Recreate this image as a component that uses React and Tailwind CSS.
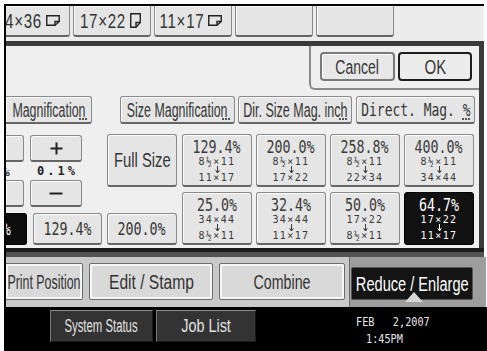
import React from "react";

const SANS = "font-['Liberation_Sans',Arial,sans-serif]";
const MONO = "font-['DejaVu_Sans_Mono',monospace]";

const face =
  "bg-[#e5e5e5] border border-[#8a8a8a] border-b-2 border-b-[#666] rounded-[3px] shadow-[inset_1px_1px_0_#fbfbfb]";

function Landscape() {
  return (
    <svg width="14" height="11" viewBox="0 0 14 11" className="shrink-0">
      <path d="M0.75 0.75H13.25V6.5L9 10.25H0.75Z" fill="none" stroke="#222" strokeWidth="1.4" />
      <path d="M13.25 6.5H9V10.25" fill="none" stroke="#222" strokeWidth="1.4" />
    </svg>
  );
}

function Portrait() {
  return (
    <svg width="11" height="15" viewBox="0 0 11 15" className="shrink-0">
      <path d="M0.75 0.75H10.25V9.5L6 14.25H0.75Z" fill="none" stroke="#222" strokeWidth="1.4" />
      <path d="M10.25 9.5H6V14.25" fill="none" stroke="#222" strokeWidth="1.4" />
    </svg>
  );
}

function Arrow() {
  return (
    <svg width="5" height="8" viewBox="0 0 5 8" className="shrink-0 overflow-visible">
      <path d="M2.5 0V6.5M0.6 4.2L2.5 7L4.4 4.2" fill="none" stroke="currentColor" strokeWidth="1" />
    </svg>
  );
}

function Dots() {
  return (
    <span className="absolute right-[4px] bottom-[2px] flex gap-[1px]">
      <span className="w-[2px] h-[2px] bg-[#555]" />
      <span className="w-[2px] h-[2px] bg-[#555]" />
      <span className="w-[2px] h-[2px] bg-[#555]" />
    </span>
  );
}

function MagBtn({ big, a, b, sel }) {
  return (
    <div
      className={`h-[53px] flex flex-col items-center pt-[2px] ${
        sel
          ? "bg-[#111] border border-black rounded-[3px] text-white"
          : `${face} text-[#3a3a3a]`
      }`}
    >
      <div className="h-[20px] flex items-center">
        <span className={`${MONO} inline-block whitespace-nowrap text-[18px] leading-none scale-x-[0.74]`}>{big}</span>
      </div>
      <div className={`${MONO} h-[10px] flex items-center whitespace-nowrap text-[10px] leading-none tracking-[1.4px]`}>{a}</div>
      <div className="h-[6px] flex items-center justify-center">
        <Arrow />
      </div>
      <div className={`${MONO} h-[10px] flex items-center whitespace-nowrap text-[10px] leading-none tracking-[1.4px]`}>{b}</div>
    </div>
  );
}

const grid = [
  ["129.4%", "8½×11", "11×17"],
  ["200.0%", "8½×11", "17×22"],
  ["258.8%", "8½×11", "22×34"],
  ["400.0%", "8½×11", "34×44"],
  ["25.0%", "34×44", "8½×11"],
  ["32.4%", "34×44", "11×17"],
  ["50.0%", "17×22", "8½×11"],
  ["64.7%", "17×22", "11×17", true],
];

const topBtn = `h-[31px] w-[78px] shrink-0 flex items-center justify-end gap-[4px] pr-[9px] ${face} border-t-0 rounded-t-none text-[#333]`;
const tab =
  "h-[37px] shrink-0 flex items-center justify-center bg-[#d9d9d9] border border-[#6b6b6b] shadow-[inset_0_0_0_2px_#f6f6f6] rounded-[2px] text-[#333]";
const stat =
  "h-[32px] shrink-0 flex items-center justify-center bg-[#333] border border-t-[#8a8a8a] border-l-[#7a7a7a] border-r-[#1a1a1a] border-b-[#1a1a1a] text-[#e2e2e2]";

export default function App() {
  return (
    <div className={`w-[487px] h-[351px] bg-white overflow-hidden pl-[4px] pt-[4px] ${SANS} text-[#363636]`}>
      <div className="w-[483px] h-[347px] flex flex-col border-l-2 border-black">
        {/* paper size row */}
        <div className="h-[37px] w-[478px] shrink-0 border-t-2 border-black bg-[#ececec] flex items-start gap-[3px] overflow-hidden">
          <div className={`${topBtn} ml-[-14px]`}>
            <span className="inline-block whitespace-nowrap text-[21px] leading-none origin-right scale-x-[0.72] tracking-[1px]">24×36</span>
            <Landscape />
          </div>
          <div className={topBtn}>
            <span className="inline-block whitespace-nowrap text-[21px] leading-none origin-right scale-x-[0.72] tracking-[1px]">17×22</span>
            <Portrait />
          </div>
          <div className={topBtn}>
            <span className="inline-block whitespace-nowrap text-[21px] leading-none origin-right scale-x-[0.72] tracking-[1px]">11×17</span>
            <Landscape />
          </div>
          <div className={topBtn} />
          <div className={topBtn} />
        </div>

        <div className="h-[5px] w-[478px] shrink-0 bg-[#3a3a3a]" />

        {/* main panel */}
        <div className="h-[202px] w-[478px] shrink-0 bg-[#efefef] border-r-[5px] border-[#3a3a3a] flex flex-col overflow-hidden">
          <div className="h-[44px] shrink-0 flex justify-end">
            <div className="w-[170px] h-[44px] border-l-2 border-b-2 border-[#8a8a8a] rounded-bl-[6px] flex items-start pt-[6px] pl-[9px] gap-[3px]">
              <div className="w-[75px] h-[29px] flex items-center justify-center bg-[#e8e8e8] border-2 border-[#7a7a7a] rounded-[4px] shadow-[inset_1px_1px_0_#fff]">
                <span className="inline-block whitespace-nowrap text-[20px] leading-none scale-x-[0.7]">Cancel</span>
              </div>
              <div className="w-[74px] h-[29px] flex items-center justify-center bg-[#ececec] border-2 border-[#1c1c1c] rounded-[4px]">
                <span className="inline-block whitespace-nowrap text-[20px] leading-none scale-x-[0.75]">OK</span>
              </div>
            </div>
          </div>

          <div className="h-[28px] mt-[6px] shrink-0 flex">
            <div className={`relative w-[86px] shrink-0 flex items-center justify-center ${face} border-l-0 rounded-l-none`}>
              <span className="inline-block whitespace-nowrap text-[20px] leading-none scale-x-[0.62]">Magnification</span>
              <Dots />
            </div>
            <div className={`relative ml-[28px] w-[115px] shrink-0 flex items-center justify-center ${face}`}>
              <span className="inline-block whitespace-nowrap text-[20px] leading-none scale-x-[0.62]">Size Magnification</span>
              <Dots />
            </div>
            <div className={`relative ml-[3px] w-[114px] shrink-0 flex items-center justify-center ${face}`}>
              <span className="inline-block whitespace-nowrap text-[20px] leading-none scale-x-[0.625]">Dir. Size Mag. inch</span>
              <Dots />
            </div>
            <div className={`relative ml-[4px] w-[119px] shrink-0 flex items-center justify-center ${face}`}>
              <span className={`${MONO} inline-block whitespace-nowrap text-[18px] leading-none scale-x-[0.72]`}>Direct. Mag. %</span>
              <Dots />
            </div>
          </div>

          <div className="h-[111px] mt-[10px] shrink-0 flex">
            <div className="w-[171px] shrink-0 flex flex-col">
              <div className="h-[73px] flex items-start">
                <div className="w-[18px] shrink-0 flex flex-col overflow-hidden">
                  <div className={`h-[27px] mt-[1px] ${face} border-l-0 rounded-l-none`} />
                  <div className="h-[18px] flex items-center">
                    <span className={`${MONO} ml-[-4px] text-[13px] font-bold leading-none`}>%</span>
                  </div>
                  <div className={`h-[27px] ${face} border-l-0 rounded-l-none`} />
                </div>
                <div className="ml-[6px] w-[52px] shrink-0 flex flex-col">
                  <div className={`h-[27px] mt-[1px] flex items-center justify-center ${face}`}>
                    <svg width="13" height="13" viewBox="0 0 13 13">
                      <path d="M6.5 0.5V12.5M0.5 6.5H12.5" stroke="#222" strokeWidth="2" />
                    </svg>
                  </div>
                  <div className={`${MONO} h-[18px] flex items-center justify-center text-[12px] font-bold leading-none tracking-[3px] pl-[3px] text-[#222]`}>
                    0.1%
                  </div>
                  <div className={`h-[27px] flex items-center justify-center ${face}`}>
                    <svg width="14" height="3" viewBox="0 0 14 3">
                      <path d="M0.5 1.5H13.5" stroke="#222" strokeWidth="2" />
                    </svg>
                  </div>
                </div>
                <div className={`ml-[25px] w-[70px] h-[53px] shrink-0 flex items-center justify-center ${face}`}>
                  <span className="inline-block whitespace-nowrap text-[20px] leading-none scale-x-[0.74]">Full Size</span>
                </div>
              </div>
              <div className="h-[32px] mt-[6px] flex">
                <div className="w-[21px] shrink-0 flex items-center justify-end pr-[15px] bg-[#0c0c0c] border border-l-0 border-black rounded-r-[3px] overflow-hidden text-white">
                  <span className={`${MONO} inline-block text-[18px] leading-none origin-right scale-x-[0.74]`}>%</span>
                </div>
                <div className={`ml-[6px] w-[69px] shrink-0 flex items-center justify-center ${face}`}>
                  <span className={`${MONO} inline-block whitespace-nowrap text-[18px] leading-none scale-x-[0.74]`}>129.4%</span>
                </div>
                <div className={`ml-[5px] w-[70px] shrink-0 flex items-center justify-center ${face}`}>
                  <span className={`${MONO} inline-block whitespace-nowrap text-[18px] leading-none scale-x-[0.74]`}>200.0%</span>
                </div>
              </div>
            </div>
            <div className="ml-[5px] grid grid-cols-[70px_70px_70px_70px] grid-rows-[53px_53px] gap-x-[4px] gap-y-[5px]">
              {grid.map((g, i) => (
                <MagBtn key={i} big={g[0]} a={g[1]} b={g[2]} sel={g[3]} />
              ))}
            </div>
          </div>
        </div>

        <div className="h-[9px] w-[478px] shrink-0 bg-[linear-gradient(#1c1c1c_0_45%,#525252_45%)]" />

        {/* function tabs */}
        <div className="h-[50px] w-[480px] shrink-0 flex">
          <div className="w-[343px] shrink-0 bg-[#c9c9c9] flex items-start pt-[6px] overflow-hidden">
            <div className={`${tab} w-[77px] border-l-0 rounded-l-none`}>
              <span className="inline-block whitespace-nowrap text-[20px] leading-none scale-x-[0.62]">Print Position</span>
            </div>
            <div className={`${tab} ml-[6px] w-[124px]`}>
              <span className="inline-block whitespace-nowrap text-[20px] leading-none scale-x-[0.78]">Edit / Stamp</span>
            </div>
            <div className={`${tab} ml-[6px] w-[126px]`}>
              <span className="inline-block whitespace-nowrap text-[20px] leading-none scale-x-[0.71]">Combine</span>
            </div>
          </div>
          <div className="relative w-[137px] shrink-0 bg-[#9d9d9d] border-l border-[#6a6a6a] pt-[10px] pl-[1px]">
            <div className="w-[122px] h-[33px] flex items-center justify-center bg-[#141414] border border-[#555] rounded-[2px] text-white">
              <span className="inline-block whitespace-nowrap text-[20px] leading-none scale-x-[0.73]">Reduce / Enlarge</span>
            </div>
            <svg width="18" height="10" viewBox="0 0 18 10" className="absolute left-[55px] top-[35px]">
              <polygon points="9,0 18,10 0,10" fill="#d6d6d6" />
            </svg>
          </div>
        </div>

        {/* status bar */}
        <div className="h-[44px] w-[481px] shrink-0 bg-black flex items-start pt-[3px]">
          <div className={`${stat} ml-[44px] w-[103px]`}>
            <span className="inline-block whitespace-nowrap text-[18px] leading-none scale-x-[0.63]">System Status</span>
          </div>
          <div className={`${stat} ml-[3px] w-[100px]`}>
            <span className="inline-block whitespace-nowrap text-[18px] leading-none scale-x-[0.8]">Job List</span>
          </div>
          <div className={`${MONO} ml-[100px] mt-[4px] flex flex-col text-[12px] leading-[17px] text-[#e6e6e6]`}>
            <span className="inline-block whitespace-pre origin-left scale-x-[0.85]">FEB   2,2007</span>
            <span className="inline-block whitespace-pre origin-left scale-x-[0.85] ml-[10px]">1:45PM</span>
          </div>
        </div>
      </div>
    </div>
  );
}
